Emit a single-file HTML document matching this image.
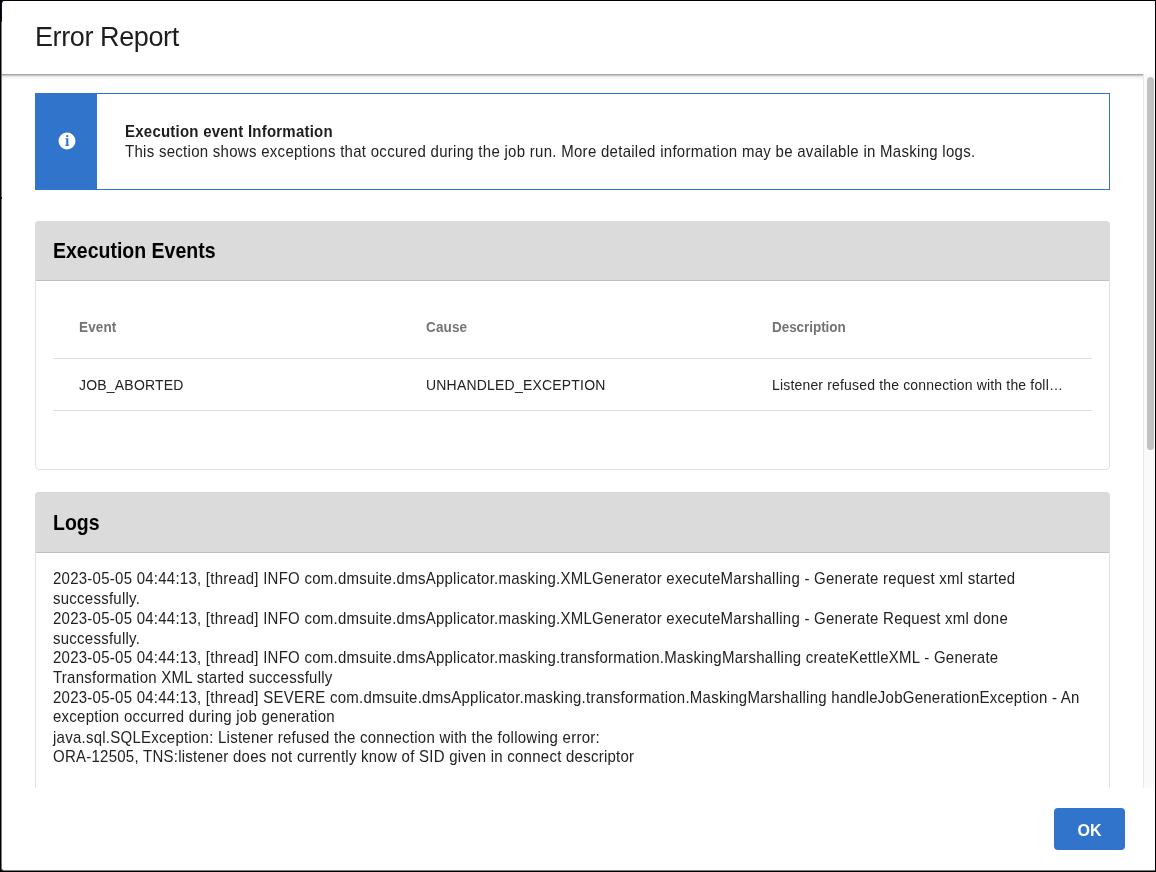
<!DOCTYPE html>
<html><head><meta charset="utf-8">
<style>
html,body{margin:0;padding:0;width:1156px;height:872px;overflow:hidden;background:#000;}
*{box-sizing:border-box;}
body{font-family:"Liberation Sans",sans-serif;color:#222;position:relative;}
.a{position:absolute;white-space:nowrap;will-change:transform;}
.sy{transform-origin:0 0;transform:scaleY(1.08);}
.sy2{transform-origin:0 0;transform:scaleY(1.1);}
.title{left:35px;top:19px;font-size:27px;line-height:36px;letter-spacing:-0.4px;color:#1d1d1d;}
.info{left:35px;top:93px;width:1075px;height:97px;border:1px solid #3174cc;background:#fff;}
.blue{left:35px;top:93px;width:62px;height:97px;background:#3174cc;}
.t1{left:125px;top:122px;font-size:15px;line-height:18px;font-weight:bold;letter-spacing:0.23px;color:#1d1d1d;}
.t2{left:125px;top:142px;font-size:15px;line-height:18px;letter-spacing:0.28px;color:#222;}
.panel{left:35px;width:1075px;border:1px solid #e2e2e2;border-radius:4px;background:#fff;}
.ph{left:35px;width:1075px;height:59px;background:#dbdbdb;border-radius:4px 4px 0 0;}
.phl{left:36px;width:1073px;height:1px;background:#bfbfbf;}
.h2{font-size:19.5px;line-height:24px;font-weight:bold;color:#000;}
.th{font-size:13.5px;line-height:16px;font-weight:bold;letter-spacing:0.15px;color:#737373;}
.td{font-size:14px;line-height:18px;letter-spacing:0.2px;color:#222;}
.rl{left:53px;width:1039px;height:1px;background:#dedede;}
.log{left:52.5px;font-size:15px;line-height:18.333px;letter-spacing:0.25px;color:#222;}
.ok{left:1054px;top:808px;width:71px;height:42px;background:#3174cc;border-radius:4px;color:#fff;font-weight:bold;font-size:16px;text-align:center;line-height:45px;}
</style></head><body>
<div class="a" style="left:1px;top:1px;width:1154px;height:870px;background:#7a7a7a;border-radius:3px 0 0 3px;"></div>
<div class="a" style="left:2px;top:1px;width:1153px;height:869px;background:#fff;border-radius:3px 0 0 3px;"></div>
<div class="a" style="left:1px;top:1px;width:2px;height:21px;background:#07122a;"></div>
<div class="a" style="left:1px;top:197px;width:1px;height:2px;background:#0a2a5a;"></div>

<div class="a info"></div>
<div class="a blue"></div>
<svg class="a" style="left:56px;top:130px;" width="22" height="22" viewBox="56 130 22 22">
  <circle cx="67" cy="141" r="8.45" fill="#fff"/>
  <rect x="66.1" y="135" width="2.2" height="2.1" rx="0.9" fill="#3174cc"/>
  <rect x="65.3" y="138.2" width="1.2" height="1" fill="#3174cc" fill-opacity="0.7"/>
  <rect x="66.2" y="138.2" width="2.1" height="7.4" fill="#3174cc"/>
  <rect x="65.2" y="144.7" width="3.9" height="1.1" fill="#3174cc"/>
</svg>
<div class="a t1 sy">Execution event Information</div>
<div class="a t2 sy">This section shows exceptions that occured during the job run. More detailed information may be available in Masking logs.</div>

<div class="a panel" style="top:221px;height:249px;"></div>
<div class="a ph" style="top:221px;"></div>
<div class="a phl" style="top:280px;"></div>
<div class="a h2 sy2" style="left:53px;top:236.5px;">Execution Events</div>
<div class="a th sy" style="left:79px;top:319px;">Event</div>
<div class="a th sy" style="left:426px;top:319px;">Cause</div>
<div class="a th sy" style="left:772px;top:319px;letter-spacing:-0.05px;">Description</div>
<div class="a rl" style="top:358px;"></div>
<div class="a td sy" style="left:79px;top:375px;">JOB_ABORTED</div>
<div class="a td sy" style="left:426px;top:375px;">UNHANDLED_EXCEPTION</div>
<div class="a td sy" style="left:772px;top:375px;letter-spacing:0.17px;">Listener refused the connection with the foll…</div>
<div class="a rl" style="top:410px;"></div>

<div class="a panel" style="top:492px;height:310px;"></div>
<div class="a ph" style="top:492px;height:60px;"></div>
<div class="a phl" style="top:552px;"></div>
<div class="a h2 sy2" style="left:53px;top:508.5px;">Logs</div>
<div class="a log sy" style="top:569px;">2023-05-05 04:44:13, [thread] INFO com.dmsuite.dmsApplicator.masking.XMLGenerator executeMarshalling - Generate request xml started<br>successfully.<br>2023-05-05 04:44:13, [thread] INFO com.dmsuite.dmsApplicator.masking.XMLGenerator executeMarshalling - Generate Request xml done<br>successfully.<br>2023-05-05 04:44:13, [thread] INFO com.dmsuite.dmsApplicator.masking.transformation.MaskingMarshalling createKettleXML - Generate<br>Transformation XML started successfully<br>2023-05-05 04:44:13, [thread] SEVERE com.dmsuite.dmsApplicator.masking.transformation.MaskingMarshalling handleJobGenerationException - An<br>exception occurred during job generation<br>java.sql.SQLException: Listener refused the connection with the following error:<br>ORA-12505, TNS:listener does not currently know of SID given in connect descriptor</div>

<!-- footer cover -->
<div class="a" style="left:2px;top:788px;width:1153px;height:82px;background:#fff;border-radius:0 0 0 3px;"></div>
<div class="a" style="left:2px;top:1px;width:1153px;height:73px;background:#fff;border-radius:3px 0 0 0;"></div>
<div class="a title">Error Report</div>
<!-- header divider + shadow -->
<div class="a" style="left:2px;top:74px;width:1141px;height:6px;background:linear-gradient(to bottom,#a6a6a6 0px,#a6a6a6 1px,#cacaca 1px,#cacaca 2px,#e6e6e6 2px,#e6e6e6 3px,#f3f3f3 3px,#f3f3f3 4px,#f9f9f9 4px,#f9f9f9 5px,#fcfcfc 5px,#fcfcfc 6px);"></div>
<!-- scrollbar -->
<div class="a" style="left:1143px;top:74px;width:12px;height:714px;background:#fafafa;border-left:1px solid #e8e8e8;"></div>
<div class="a" style="left:1147px;top:77px;width:7px;height:373px;background:#c1c1c1;border-radius:3.5px;"></div>
<div class="a ok">OK</div>
</body></html>
